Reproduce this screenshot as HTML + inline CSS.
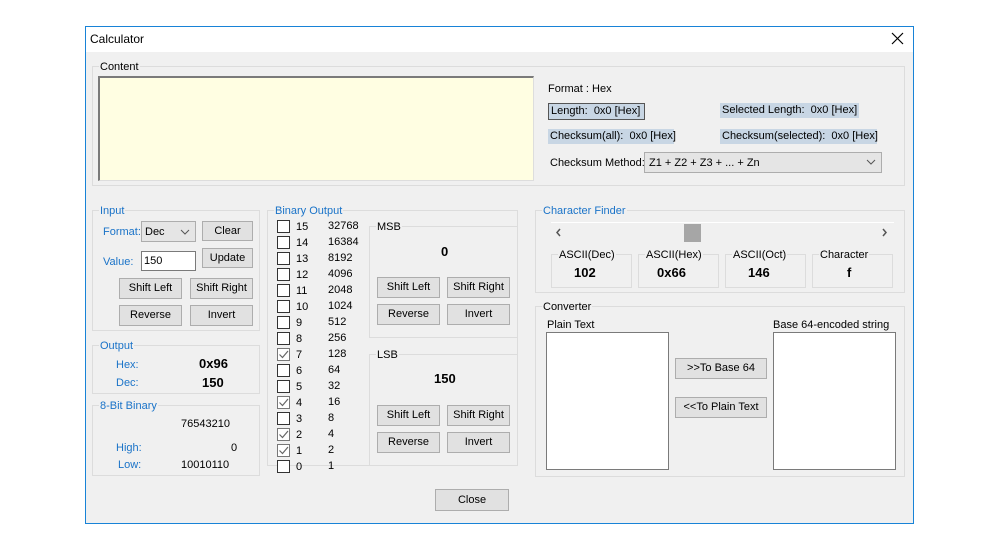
<!DOCTYPE html>
<html><head><meta charset="utf-8"><style>
*{box-sizing:border-box;margin:0;padding:0}
body{width:1000px;height:550px;background:#fff;position:relative;font-family:"Liberation Sans",sans-serif;font-size:11px;color:#000;overflow:hidden}
.a{position:absolute;white-space:nowrap}
.t{margin-top:1px}
.win{position:absolute;left:85px;top:26px;width:829px;height:498px;border:1px solid #1883d7;background:#f0f0f0}
.title{position:absolute;left:86px;top:27px;width:827px;height:25px;background:#fff}
.g{position:absolute;border:1px solid #dcdcdc}
.gl{position:absolute;background:#f0f0f0;padding:0 1px;top:-7px;left:6px;line-height:14px}
.blue{color:#1a73c8}
.btn{position:absolute;background:#e1e1e1;border:1px solid #adadad;text-align:center;line-height:19px}
.cb{position:absolute;width:13px;height:13px;border:1px solid #333;background:#fff}
.b{font-weight:bold;font-size:13px}
.hl{position:absolute;background:#c8d6e4;line-height:15px;padding:0 2px}
</style></head><body>
<div class="win"></div>
<div class="title"></div>
<div class="a" style="left:90px;top:32px;font-size:12px">Calculator</div>
<svg class="a" style="left:891px;top:32px" width="13" height="13"><path d="M1 1L12 12M12 1L1 12" stroke="#000" stroke-width="1.2"/></svg>

<div class="g" style="left:92px;top:66px;width:813px;height:120px"><span class="gl">Content</span></div>
<div class="a" style="left:98px;top:76px;width:436px;height:105px;background:#fffee2;border:2px solid #7a7a7a;border-right:1px solid #ddd;border-bottom:1px solid #ddd"></div>
<div class="a t" style="left:548px;top:82px">Format : Hex</div>
<div class="hl a" style="left:548px;top:103px;border:1px solid #555;width:97px">Length:&nbsp; 0x0 [Hex]</div>
<div class="hl a" style="left:720px;top:103px;width:139px">Selected Length:&nbsp; 0x0 [Hex]</div>
<div class="hl a" style="left:548px;top:129px;width:126px">Checksum(all):&nbsp; 0x0 [Hex]</div>
<div class="hl a" style="left:720px;top:129px;width:157px">Checksum(selected):&nbsp; 0x0 [Hex]</div>
<div class="a t" style="left:550px;top:156px">Checksum Method:</div>
<div class="a" style="left:644px;top:152px;width:238px;height:21px;background:#e5e5e5;border:1px solid #adadad;line-height:20px;padding-left:4px">Z1 + Z2 + Z3 + ... + Zn</div>
<svg class="a" style="left:866px;top:158px" width="10" height="8"><path d="M1 2L5 6L9 2" fill="none" stroke="#555"/></svg>

<div class="g" style="left:92px;top:210px;width:168px;height:121px"><span class="gl blue">Input</span></div>
<div class="a blue t" style="left:103px;top:225px">Format:</div>
<div class="a" style="left:141px;top:221px;width:55px;height:21px;background:#e5e5e5;border:1px solid #adadad;line-height:20px;padding-left:3px">Dec</div>
<svg class="a" style="left:180px;top:228px" width="10" height="8"><path d="M1 2L5 6L9 2" fill="none" stroke="#555"/></svg>
<div class="btn" style="left:202px;top:221px;width:51px;height:20px">Clear</div>
<div class="a blue t" style="left:103px;top:255px">Value:</div>
<div class="a" style="left:141px;top:251px;width:55px;height:20px;background:#fff;border:1px solid #7a7a7a;line-height:19px;padding-left:2px">150</div>
<div class="btn" style="left:202px;top:248px;width:51px;height:20px">Update</div>
<div class="btn" style="left:119px;top:278px;width:63px;height:21px">Shift Left</div>
<div class="btn" style="left:190px;top:278px;width:63px;height:21px">Shift Right</div>
<div class="btn" style="left:119px;top:305px;width:63px;height:21px">Reverse</div>
<div class="btn" style="left:190px;top:305px;width:63px;height:21px">Invert</div>

<div class="g" style="left:92px;top:345px;width:168px;height:49px"><span class="gl blue">Output</span></div>
<div class="a blue t" style="left:116px;top:358px">Hex:</div>
<div class="a b" style="left:199px;top:356px">0x96</div>
<div class="a blue t" style="left:116px;top:376px">Dec:</div>
<div class="a b" style="left:202px;top:375px">150</div>

<div class="g" style="left:92px;top:405px;width:168px;height:71px"><span class="gl blue">8-Bit Binary</span></div>
<div class="a t" style="left:181px;top:417px">76543210</div>
<div class="a blue t" style="left:116px;top:441px">High:</div>
<div class="a t" style="left:231px;top:441px">0</div>
<div class="a blue t" style="left:118px;top:458px">Low:</div>
<div class="a t" style="left:181px;top:458px">10010110</div>

<div class="g" style="left:267px;top:210px;width:251px;height:256px"><span class="gl blue">Binary Output</span></div>
<div id="rows"></div>
<div class="g" style="left:369px;top:226px;width:149px;height:112px"><span class="gl">MSB</span></div>
<div class="a b" style="left:441px;top:244px">0</div>
<div class="btn" style="left:377px;top:277px;width:63px;height:21px">Shift Left</div>
<div class="btn" style="left:447px;top:277px;width:63px;height:21px">Shift Right</div>
<div class="btn" style="left:377px;top:304px;width:63px;height:21px">Reverse</div>
<div class="btn" style="left:447px;top:304px;width:63px;height:21px">Invert</div>
<div class="g" style="left:369px;top:354px;width:149px;height:112px"><span class="gl">LSB</span></div>
<div class="a b" style="left:434px;top:371px">150</div>
<div class="btn" style="left:377px;top:405px;width:63px;height:21px">Shift Left</div>
<div class="btn" style="left:447px;top:405px;width:63px;height:21px">Shift Right</div>
<div class="btn" style="left:377px;top:432px;width:63px;height:21px">Reverse</div>
<div class="btn" style="left:447px;top:432px;width:63px;height:21px">Invert</div>

<div class="g" style="left:535px;top:210px;width:370px;height:83px"><span class="gl blue">Character Finder</span></div>
<div class="a" style="left:551px;top:222px;width:343px;height:1px;background:#fff"></div>
<div class="a" style="left:684px;top:224px;width:17px;height:18px;background:#a6a6a6"></div>
<svg class="a" style="left:555px;top:228px" width="8" height="9"><path d="M5 1L2 4.5L5 8" fill="none" stroke="#555" stroke-width="1.5"/></svg>
<svg class="a" style="left:881px;top:228px" width="8" height="9"><path d="M2 1L5 4.5L2 8" fill="none" stroke="#555" stroke-width="1.5"/></svg>
<div class="g" style="left:551px;top:254px;width:81px;height:34px"><span class="gl">ASCII(Dec)</span></div>
<div class="a b" style="left:574px;top:265px">102</div>
<div class="g" style="left:638px;top:254px;width:81px;height:34px"><span class="gl">ASCII(Hex)</span></div>
<div class="a b" style="left:657px;top:265px">0x66</div>
<div class="g" style="left:725px;top:254px;width:81px;height:34px"><span class="gl">ASCII(Oct)</span></div>
<div class="a b" style="left:748px;top:265px">146</div>
<div class="g" style="left:812px;top:254px;width:81px;height:34px"><span class="gl">Character</span></div>
<div class="a b" style="left:847px;top:265px">f</div>

<div class="g" style="left:535px;top:306px;width:370px;height:171px"><span class="gl">Converter</span></div>
<div class="a t" style="left:547px;top:318px">Plain Text</div>
<div class="a" style="left:546px;top:332px;width:123px;height:138px;background:#fff;border:1px solid #7a7a7a"></div>
<div class="btn" style="left:675px;top:358px;width:92px;height:21px">&gt;&gt;To Base 64</div>
<div class="btn" style="left:675px;top:397px;width:92px;height:21px">&lt;&lt;To Plain Text</div>
<div class="a t" style="left:773px;top:318px">Base 64-encoded string</div>
<div class="a" style="left:773px;top:332px;width:123px;height:138px;background:#fff;border:1px solid #7a7a7a"></div>

<div class="btn" style="left:435px;top:489px;width:74px;height:22px;line-height:21px">Close</div>

<script>
var v=[32768,16384,8192,4096,2048,1024,512,256,128,64,32,16,8,4,2,1],h='';
for(var i=0;i<16;i++){var n=15-i,y=220+i*16,c=[7,4,2,1].indexOf(n)>=0;
h+='<div class="cb" style="left:277px;top:'+y+'px;border-color:'+(c?'#777':'#333')+'">'+(c?'<svg width="11" height="11" style="position:absolute;left:0;top:0"><path d="M1.5 5.5L4.5 8.5L10 2" fill="none" stroke="#666" stroke-width="1.2"/></svg>':'')+'</div>'+
'<div class="a" style="left:296px;top:'+(y+1)+'px">'+n+'</div><div class="a" style="left:328px;top:'+(y)+'px">'+v[i]+'</div>';}
document.getElementById('rows').innerHTML=h;
</script>
</body></html>
